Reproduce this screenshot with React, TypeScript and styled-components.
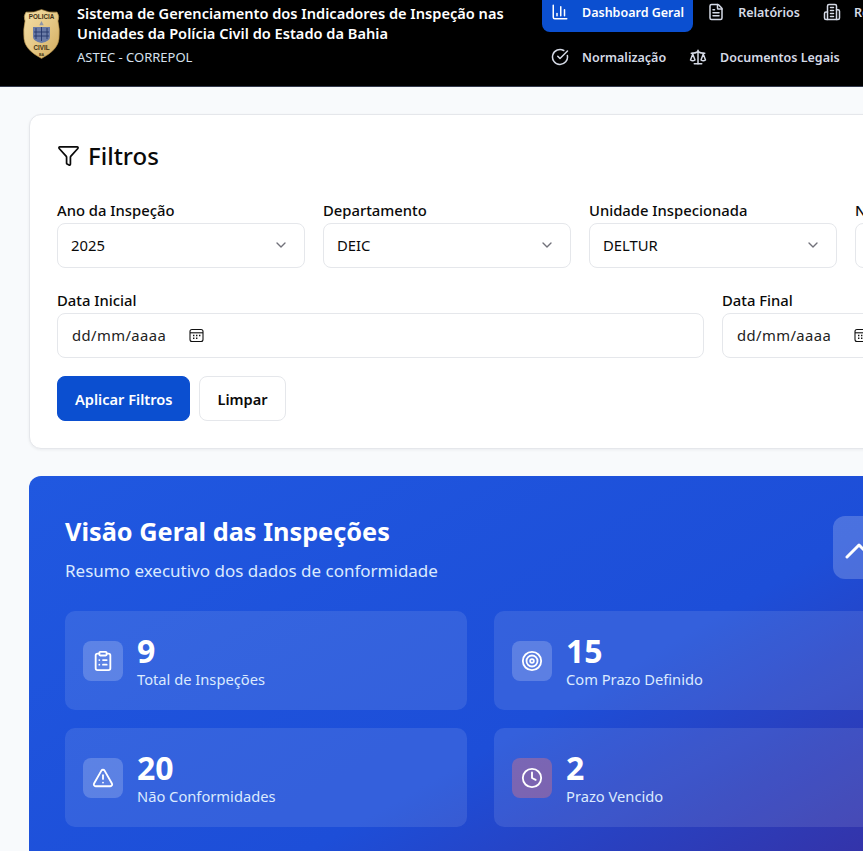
import * as React from 'react'
import styled, { createGlobalStyle } from 'styled-components'
import {
  ChartColumn,
  FileText,
  CircleCheckBig,
  Scale,
  Funnel,
  ChevronDown,
  ChevronUp,
  ClipboardList,
  Target,
  TriangleAlert,
  Clock,
} from 'lucide-react'

const GlobalStyle = createGlobalStyle`
  html, body {
    margin: 0;
    padding: 0;
    height: 851px;
    overflow: hidden;
    background: #f8fafc;
    font-family: 'Noto Sans', 'Open Sans', sans-serif;
  }
  * { box-sizing: border-box; }
`

const Header = styled.header`
  height: 87px;
  width: 1400px;
  background: #000;
  border-bottom: 1px solid #333a4d;
  display: flex;
  align-items: flex-start;
  padding-left: 22px;
  overflow: hidden;
`

const Badge = styled.svg`
  width: 39px;
  height: 50px;
  margin-top: 9px;
  flex-shrink: 0;
`

const Brand = styled.div`
  width: 465px;
  margin-left: 16px;
  margin-top: 4px;
  flex-shrink: 0;
`

const BrandTitle = styled.h1`
  margin: 0;
  color: #fff;
  font-size: 14.6px;
  line-height: 19.5px;
  font-weight: 600;
`

const BrandSub = styled.p`
  margin: 5px 0 0;
  color: #d6e0ee;
  font-size: 13px;
  line-height: 18px;
`

const Nav = styled.nav`
  margin-top: -8px;
  display: flex;
  flex-direction: column;
  gap: 5px;
`

const NavRow = styled.div`
  display: flex;
  gap: 5px;
`

const NavItem = styled.a<{ $active?: boolean }>`
  height: 40px;
  padding: 0 9px 0 9px;
  display: flex;
  align-items: center;
  gap: 13px;
  border-radius: 8px;
  font-size: 12.5px;
  font-weight: 600;
  white-space: nowrap;
  color: ${p => (p.$active ? '#fff' : '#d5dae6')};
  background: ${p => (p.$active ? '#0b4fd0' : 'transparent')};
`

const Page = styled.main`
  width: 1426px;
  padding: 27px 29px 0;
  display: flex;
  flex-direction: column;
  gap: 27px;
`

const FilterCard = styled.section`
  height: 335px;
  background: #fff;
  border: 1px solid #e5e7eb;
  border-radius: 12px;
  box-shadow: 0 1px 3px rgba(15, 23, 42, 0.06);
  padding: 25px 27px 27px;
`

const FilterTitle = styled.h2`
  margin: 0;
  height: 30px;
  display: flex;
  align-items: center;
  gap: 8px;
  font-size: 24px;
  font-weight: 500;
  color: #0a0a0a;
`

const FieldGrid = styled.div<{ $cols: number }>`
  display: grid;
  grid-template-columns: repeat(${p => p.$cols}, 1fr);
  gap: 18px;
  margin-top: ${p => (p.$cols === 5 ? '30px' : '22px')};
`

const Field = styled.div`
  display: flex;
  flex-direction: column;
  gap: 3px;
`

const FieldLabel = styled.label`
  font-size: 14.8px;
  line-height: 20px;
  font-weight: 500;
  color: #0a0a0a;
`

const Control = styled.div`
  height: 45px;
  border: 1px solid #e5e7eb;
  border-radius: 8px;
  background: #fff;
  padding: 0 14px 1px 13px;
  display: flex;
  align-items: center;
  justify-content: space-between;
  font-size: 14.8px;
  color: #0a0a0a;
  svg {
    color: #71717a;
    margin-right: 1px;
  }
`

const DateControl = styled(Control)`
  justify-content: flex-start;
  padding-left: 14px;
  gap: 23px;
  letter-spacing: 0.4px;
  color: #222;
  svg {
    color: #111;
  }
`

const Actions = styled.div`
  display: flex;
  gap: 9px;
  margin-top: 18px;
`

const Button = styled.button<{ $primary?: boolean }>`
  height: 45px;
  padding: 0 17px;
  border-radius: 8px;
  border: 1px solid ${p => (p.$primary ? '#0b4fd0' : '#e5e7eb')};
  background: ${p => (p.$primary ? '#0b4fd0' : '#fff')};
  color: ${p => (p.$primary ? '#fff' : '#0a0a0a')};
  font-family: inherit;
  font-size: 14.6px;
  font-weight: 600;
`

const Overview = styled.section`
  height: 520px;
  border-radius: 12px;
  padding: 36px;
  background: linear-gradient(150deg, #2058e0 0%, #1d4ed8 41%, #3730a3 69%, #3730a3 100%);
  color: #fff;
`

const OverviewHead = styled.div`
  display: flex;
  justify-content: space-between;
  align-items: flex-start;
  height: 99px;
`

const OverviewTitle = styled.h2`
  margin: 2px 0 0;
  font-size: 25.3px;
  line-height: 34px;
  font-weight: 700;
`

const OverviewSub = styled.p`
  margin: 11px 0 0;
  font-size: 17px;
  line-height: 24px;
  color: #dbeafe;
`

const CollapseButton = styled.button`
  width: 63px;
  height: 63px;
  margin: 4px 465px 0 0;
  padding: 6px 0 0 2px;
  border: 0;
  border-radius: 12px;
  background: rgba(255, 255, 255, 0.2);
  color: #fff;
  display: flex;
  align-items: center;
  justify-content: flex-start;
  svg {
    flex-shrink: 0;
  }
`

const StatGrid = styled.div`
  display: grid;
  grid-template-columns: repeat(3, 402px);
  column-gap: 27px;
  row-gap: 18px;
`

const StatCard = styled.div`
  height: 99px;
  border-radius: 10px;
  background: rgba(255, 255, 255, 0.1);
  padding: 0 18px;
  display: flex;
  align-items: center;
  gap: 14px;
`

const StatIcon = styled.div<{ $alert?: boolean }>`
  width: 40px;
  height: 40px;
  border-radius: 8px;
  flex-shrink: 0;
  display: flex;
  align-items: center;
  justify-content: center;
  background: ${p => (p.$alert ? 'rgba(245, 120, 120, 0.36)' : 'rgba(255, 255, 255, 0.2)')};
`

const StatValue = styled.div`
  font-size: 32px;
  line-height: 36px;
  font-weight: 700;
  color: #fff;
`

const StatLabel = styled.div`
  font-size: 14.7px;
  line-height: 20px;
  color: #dbeafe;
`

const CalendarIcon = () => (
  <svg width="15" height="15" viewBox="0 0 15 15" fill="none" stroke="currentColor" strokeWidth="1.1">
    <rect x="1" y="1.5" width="13" height="12" rx="2" />
    <path d="M1 4.8h13" />
    <path d="M4 7.5h1.4M7 7.5h1.4M10 7.5h1.4M4 10.3h1.4M7 10.3h1.4" strokeWidth="1.4" />
  </svg>
)

const TowerIcon = () => (
  <svg width="18" height="18" viewBox="0 0 24 24" fill="none" stroke="currentColor" strokeWidth="2" strokeLinecap="round" strokeLinejoin="round">
    <path d="M6 22V4a2 2 0 0 1 2-2h8a2 2 0 0 1 2 2v18Z" />
    <path d="M6 12H4a2 2 0 0 0-2 2v6a2 2 0 0 0 2 2h2" />
    <path d="M18 9h2a2 2 0 0 1 2 2v9a2 2 0 0 1-2 2h-2" />
    <path d="M10 6h4M10 10h4M10 14h4M10 18h4" />
  </svg>
)

const PoliceBadge = () => (
  <Badge viewBox="0 0 39 50">
    <defs>
      <linearGradient id="gold" x1="0" y1="0" x2="1" y2="1">
        <stop offset="0" stopColor="#f3dfa6" />
        <stop offset="0.5" stopColor="#e6c987" />
        <stop offset="1" stopColor="#d2aa5c" />
      </linearGradient>
    </defs>
    <path
      d="M4 3 Q12 4 19.5 0.5 Q27 4 35 3 Q38 7 36 12 Q38 20 37 30 Q36 41 19.5 49.5 Q3 41 2 30 Q1 20 3 12 Q1 7 4 3Z"
      fill="url(#gold)"
      stroke="#a5813c"
      strokeWidth="0.6"
    />
    <text x="19.5" y="10" textAnchor="middle" fontSize="6.3" fontWeight="700" fill="#3f3115" fontFamily="Liberation Sans, sans-serif">
      POLICIA
    </text>
    <path d="M19.5 12 l2.2 4.2 h-4.4z" fill="#8d95a8" />
    <path d="M11 18 h17 v10 q0 4 -8.5 6 q-8.5 -2 -8.5 -6z" fill="#6a7ba6" />
    <path d="M14 19 v11 M19.5 18 v14 M25 19 v11 M12 23 h15 M12 27 h15" stroke="#24356a" strokeWidth="0.9" />
    <text x="19.5" y="41" textAnchor="middle" fontSize="6.3" fontWeight="700" fill="#3f3115" fontFamily="Liberation Sans, sans-serif">
      CIVIL
    </text>
    <text x="19.5" y="46.5" textAnchor="middle" fontSize="3.6" fontWeight="700" fill="#3f3115" fontFamily="Liberation Sans, sans-serif">
      BA
    </text>
  </Badge>
)

const selects = [
  { label: 'Ano da Inspeção', value: '2025' },
  { label: 'Departamento', value: 'DEIC' },
  { label: 'Unidade Inspecionada', value: 'DELTUR' },
  { label: 'Nível de Conformidade', value: 'Todos' },
  { label: 'Status', value: 'Todos' },
]

const stats = [
  { value: '9', label: 'Total de Inspeções', Icon: ClipboardList },
  { value: '15', label: 'Com Prazo Definido', Icon: Target },
  { value: '12', label: 'Regularizadas', Icon: CircleCheckBig },
  { value: '20', label: 'Não Conformidades', Icon: TriangleAlert },
  { value: '2', label: 'Prazo Vencido', Icon: Clock, alert: true },
  { value: '13', label: 'No Prazo', Icon: Clock },
]

export default function App(): React.JSX.Element {
  return (
    <>
      <GlobalStyle />
      <Header>
        <PoliceBadge />
        <Brand>
          <BrandTitle>
            Sistema de Gerenciamento dos Indicadores de Inspeção nas Unidades da Polícia Civil do Estado da Bahia
          </BrandTitle>
          <BrandSub>ASTEC - CORREPOL</BrandSub>
        </Brand>
        <Nav>
          <NavRow>
            <NavItem $active>
              <ChartColumn size={18} />
              Dashboard Geral
            </NavItem>
            <NavItem>
              <FileText size={18} />
              Relatórios
            </NavItem>
            <NavItem>
              <TowerIcon />
              Relatórios por Unidade
            </NavItem>
          </NavRow>
          <NavRow>
            <NavItem>
              <CircleCheckBig size={18} />
              Normalização
            </NavItem>
            <NavItem>
              <Scale size={18} />
              Documentos Legais
            </NavItem>
          </NavRow>
        </Nav>
      </Header>
      <Page>
        <FilterCard>
          <FilterTitle>
            <Funnel size={23} strokeWidth={1.8} />
            Filtros
          </FilterTitle>
          <FieldGrid $cols={5}>
            {selects.map(s => (
              <Field key={s.label}>
                <FieldLabel>{s.label}</FieldLabel>
                <Control>
                  {s.value}
                  <ChevronDown size={16} />
                </Control>
              </Field>
            ))}
          </FieldGrid>
          <FieldGrid $cols={2}>
            {['Data Inicial', 'Data Final'].map(label => (
              <Field key={label}>
                <FieldLabel>{label}</FieldLabel>
                <DateControl>
                  dd/mm/aaaa
                  <CalendarIcon />
                </DateControl>
              </Field>
            ))}
          </FieldGrid>
          <Actions>
            <Button $primary>Aplicar Filtros</Button>
            <Button>Limpar</Button>
          </Actions>
        </FilterCard>
        <Overview>
          <OverviewHead>
            <div>
              <OverviewTitle>Visão Geral das Inspeções</OverviewTitle>
              <OverviewSub>Resumo executivo dos dados de conformidade</OverviewSub>
            </div>
            <CollapseButton>
              <ChevronUp size={48} strokeWidth={1.5} />
            </CollapseButton>
          </OverviewHead>
          <StatGrid>
            {stats.map(({ value, label, Icon, alert }) => (
              <StatCard key={label}>
                <StatIcon $alert={alert}>
                  <Icon size={22} color="#fff" />
                </StatIcon>
                <div>
                  <StatValue>{value}</StatValue>
                  <StatLabel>{label}</StatLabel>
                </div>
              </StatCard>
            ))}
          </StatGrid>
        </Overview>
      </Page>
    </>
  )
}
